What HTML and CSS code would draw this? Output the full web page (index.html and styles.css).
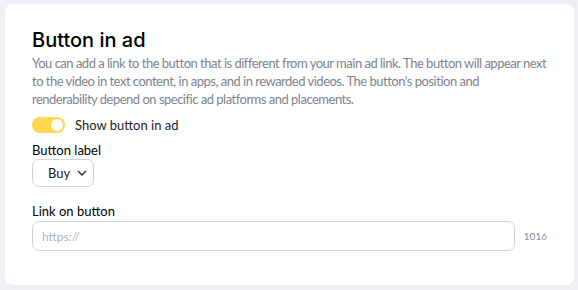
FILE: index.html
```html
<!DOCTYPE html>
<html lang="en">
<head>
  <meta charset="UTF-8">
  <title>Button in ad</title>
  <link rel="stylesheet" href="styles.css">
</head>
<body>

  <div class="card">
    <h2>Button in ad</h2>
    <p class="hint">You can add a link to the button that is different from your main ad link. The button will appear next to the video in text content, in apps, and in rewarded videos. The button's position and<br>renderability depend on specific ad platforms and placements.</p>

    <label class="switch-row">
      <span class="switch"><span class="knob"></span></span>
      Show button in ad
    </label>

    <div class="field">
      <div class="field-label">Button label</div>
      <button class="select" type="button">
        Buy
        <svg width="10" height="6" viewBox="0 0 10 6"><path d="M1 1l4 4 4-4" fill="none" stroke="#222" stroke-width="1.3"/></svg>
      </button>
    </div>

    <div class="field link-field">
      <div class="field-label">Link on button</div>
      <div class="input-row">
        <input type="text" placeholder="https://" />
        <span class="counter">1016</span>
      </div>
    </div>
  </div>

</body>
</html>
```

FILE: styles.css
```css
body {
  margin: 0;
  padding: 4px 4px 5px 5px;
  background-color: #eef0f5;
  font-family: Lato, "Noto Sans", sans-serif;
  color: #000;
}

.card {
  background-color: #fff;
  border-radius: 8px;
  height: 281px;
  box-sizing: border-box;
  padding: 22px 27px 0 27px;
}

h2 {
  font-family: Inter, sans-serif;
  font-size: 20px;
  font-weight: 500;
  margin: 0;
  line-height: 28px;
}

.hint {
  margin: 0;
  font-size: 13px;
  letter-spacing: -0.5px;
  line-height: 18px;
  color: #80838f;
  max-width: 518px;
}

.switch-row {
  display: flex;
  align-items: center;
  gap: 10px;
  font-size: 13px;
  color: #222;
  margin-top: 8px;
  height: 18px;
}

.switch {
  width: 33px;
  height: 16px;
  border-radius: 8px;
  background-color: #fed84e;
  position: relative;
}

.knob {
  position: absolute;
  right: 2px;
  top: 2px;
  width: 12px;
  height: 12px;
  border-radius: 50%;
  background-color: #fff;
}

.field {
  margin-top: 7px;
}

.field-label {
  font-size: 13px;
  line-height: 18px;
  color: #000;
}

.select {
  display: flex;
  align-items: center;
  gap: 7px;
  width: 62px;
  height: 28px;
  padding: 0 0 0 15px;
  margin-top: 0;
  background-color: #fff;
  border: 1px solid #d0d3de;
  border-radius: 7px;
  font-family: inherit;
  font-size: 13px;
  color: #222;
}

.link-field {
  margin-top: 15px;
}

.input-row {
  display: flex;
  align-items: center;
  gap: 9px;
  margin-top: 1px;
}

input {
  width: 483px;
  height: 30px;
  box-sizing: border-box;
  border: 1px solid #d0d3de;
  border-radius: 7px;
  padding: 0 9px;
  font-family: inherit;
  font-size: 12px;
}

input::placeholder {
  color: #b0b3be;
}

.counter {
  font-size: 10px;
  color: #8b8e99;
}
```
